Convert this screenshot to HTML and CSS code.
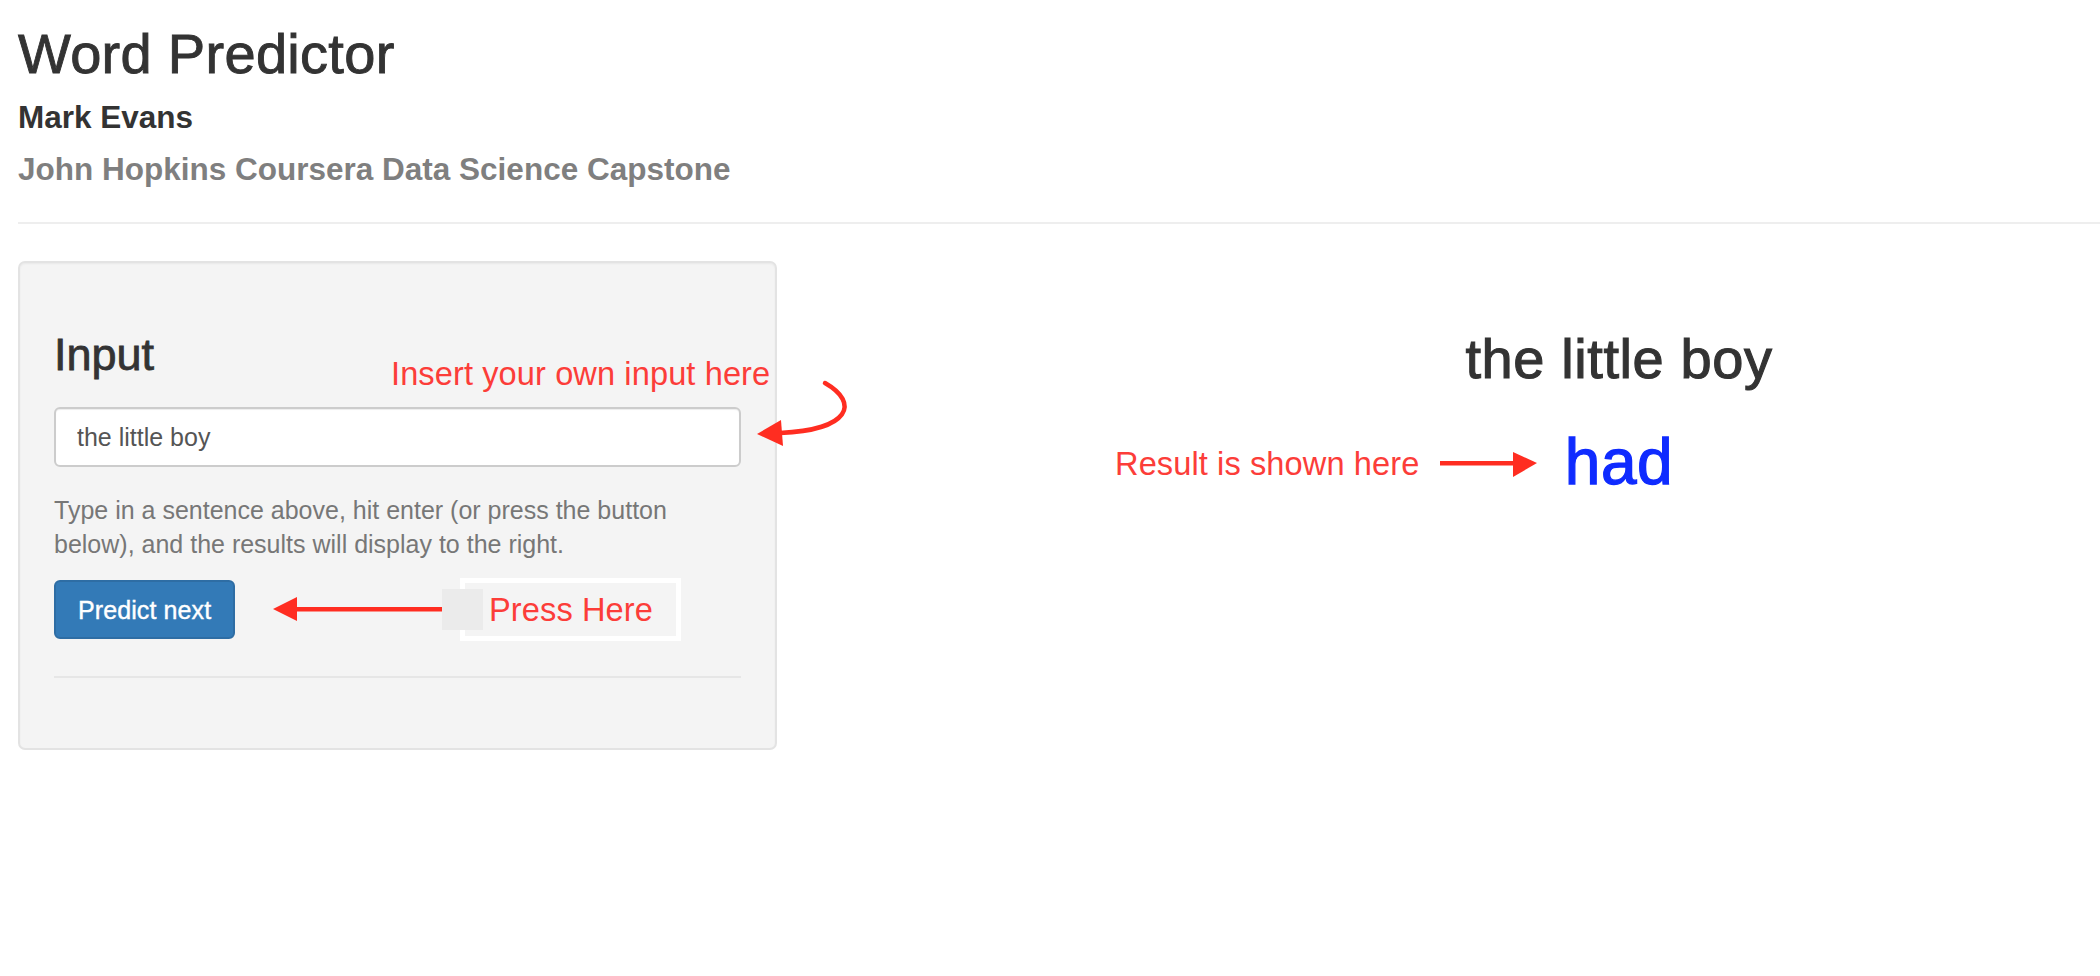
FILE: index.html
```html
<!DOCTYPE html>
<html lang="en">
<head>
<meta charset="utf-8">
<title>Word Predictor</title>
<link rel="stylesheet" href="styles.css">
</head>
<body>
<div class="page">
  <header class="title-panel">
    <h2 class="title">Word Predictor</h2>
    <h4 class="author">Mark Evans</h4>
    <h4 class="subtitle">John Hopkins Coursera Data Science Capstone</h4>
  </header>
  <hr class="rule">
  <div class="layout">
    <aside class="well">
      <h3 class="well-title">Input</h3>
      <input class="text-input" type="text" value="the little boy">
      <p class="help">Type in a sentence above, hit enter (or press the button below), and the results will display to the right.</p>
      <button class="btn-primary" type="button">Predict next</button>
      <hr class="well-rule">
    </aside>
    <main class="result">
      <h2 class="sentence">the little boy</h2>
      <div class="prediction">had</div>
    </main>
  </div>

  <!-- screenshot annotations drawn over the page -->
  <div class="note note-insert">Insert your own input here</div>
  <svg class="arrow arrow-curved" width="100" height="80" viewBox="0 0 100 80">
    <path d="M75,8 C110,28 100,55 30,58" fill="none" stroke="#ff2d21" stroke-width="4.5" stroke-linecap="round"/>
    <polygon points="7,59 31,45 33,71" fill="#ff2d21"/>
  </svg>
  <svg class="arrow arrow-left" width="175" height="30" viewBox="0 0 175 30">
    <rect x="24" y="12" width="148" height="4.5" fill="#ff2d21"/>
    <polygon points="3,14 27,2 27,26" fill="#ff2d21"/>
  </svg>
  <div class="press-frame"></div>
  <div class="press-square"></div>
  <div class="note note-press">Press Here</div>
  <div class="note note-result">Result is shown here</div>
  <svg class="arrow arrow-right" width="105" height="32" viewBox="0 0 105 32">
    <rect x="4" y="13" width="76" height="4.5" fill="#ff2d21"/>
    <polygon points="77,4 101,15 77,29" fill="#ff2d21"/>
  </svg>
</div>
</body>
</html>
```

FILE: styles.css
```css
* {
  box-sizing: border-box;
}

html, body {
  margin: 0;
  padding: 0;
  background: #ffffff;
}

body {
  font-family: "Liberation Sans", Arial, Helvetica, sans-serif;
  color: #333333;
  overflow: hidden;
}

.page {
  position: relative;
  padding: 0 18px;
  min-height: 976px;
}

/* ---------- title panel ---------- */
.title-panel {
  padding-top: 23px;
}

.title {
  margin: 0;
  font-size: 56px;
  line-height: 62px;
  font-weight: 400;
  letter-spacing: 0.3px;
  -webkit-text-stroke: 0.9px #333333;
  color: #333333;
}

.author,
.subtitle {
  margin: 0;
  font-size: 31.5px;
  line-height: 36px;
  font-weight: 700;
}

.author {
  margin-top: 14px;
  color: #333333;
}

.subtitle {
  margin-top: 16px;
  color: #7f7f7f;
}

.rule {
  margin: 35px -18px 0 0;
  border: 0;
  border-top: 2px solid #eeeeee;
  height: 0;
}

/* ---------- layout ---------- */
.layout {
  display: flex;
  gap: 36px;
  margin-top: 37px;
  align-items: flex-start;
}

.well {
  width: 759px;
  flex: none;
  background: #f4f4f4;
  border: 2px solid #e3e3e3;
  border-radius: 7px;
  padding: 34px 34px 70px;
  box-shadow: inset 0 1px 2px rgba(0, 0, 0, 0.05);
}

.well-title {
  margin: 33px 0 0;
  font-size: 45px;
  line-height: 50px;
  font-weight: 400;
  -webkit-text-stroke: 0.8px #333333;
  color: #333333;
}

.text-input {
  display: block;
  width: 100%;
  height: 60px;
  margin-top: 27px;
  padding: 0 21px;
  border: 2px solid #cccccc;
  border-radius: 6px;
  background: #ffffff;
  font-family: "Liberation Sans", Arial, sans-serif;
  font-size: 25px;
  color: #555555;
  outline: none;
  box-shadow: inset 0 1px 1px rgba(0, 0, 0, 0.075);
}

.help {
  margin: 26px 0 0;
  font-size: 25px;
  line-height: 34px;
  color: #777777;
}

.btn-primary {
  display: block;
  margin-top: 19px;
  height: 59px;
  padding: 11px 22px 9px;
  border: 2px solid #2e6da4;
  border-radius: 6px;
  background: #337ab7;
  color: #ffffff;
  font-family: "Liberation Sans", Arial, sans-serif;
  font-size: 25px;
  line-height: 35px;
  letter-spacing: 0.1px;
  -webkit-text-stroke: 0.4px #ffffff;
}

.well-rule {
  margin: 37px 0 0;
  border: 0;
  border-top: 2px solid #e6e6e6;
  height: 0;
}

/* ---------- result column ---------- */
.result {
  flex: 1;
  padding-left: 343px;
  text-align: center;
}

.sentence {
  margin: 68px 0 0;
  font-size: 56px;
  line-height: 60px;
  font-weight: 400;
  letter-spacing: 0.6px;
  -webkit-text-stroke: 1.1px #333333;
  color: #333333;
}

.prediction {
  margin-top: 37px;
  font-size: 64px;
  line-height: 72px;
  letter-spacing: 0.6px;
  -webkit-text-stroke: 1.3px #0f2bff;
  color: #0f2bff;
}

/* ---------- annotations (overlay) ---------- */
.note {
  position: absolute;
  font-size: 32.6px;
  line-height: 38px;
  letter-spacing: 0.1px;
  color: #fc3d39;
  white-space: nowrap;
}

.note-insert {
  left: 391px;
  top: 355px;
}

.note-press {
  left: 489px;
  top: 591px;
}

.note-result {
  left: 1115px;
  top: 445px;
}

.arrow {
  position: absolute;
  display: block;
}

.arrow-curved {
  left: 750px;
  top: 375px;
}

.arrow-left {
  left: 270px;
  top: 595px;
}

.arrow-right {
  left: 1436px;
  top: 448px;
}

.press-frame {
  position: absolute;
  left: 460px;
  top: 578px;
  width: 221px;
  height: 63px;
  border: 5px solid #ffffff;
}

.press-square {
  position: absolute;
  left: 442px;
  top: 589px;
  width: 41px;
  height: 41px;
  background: #ebebeb;
}
```
